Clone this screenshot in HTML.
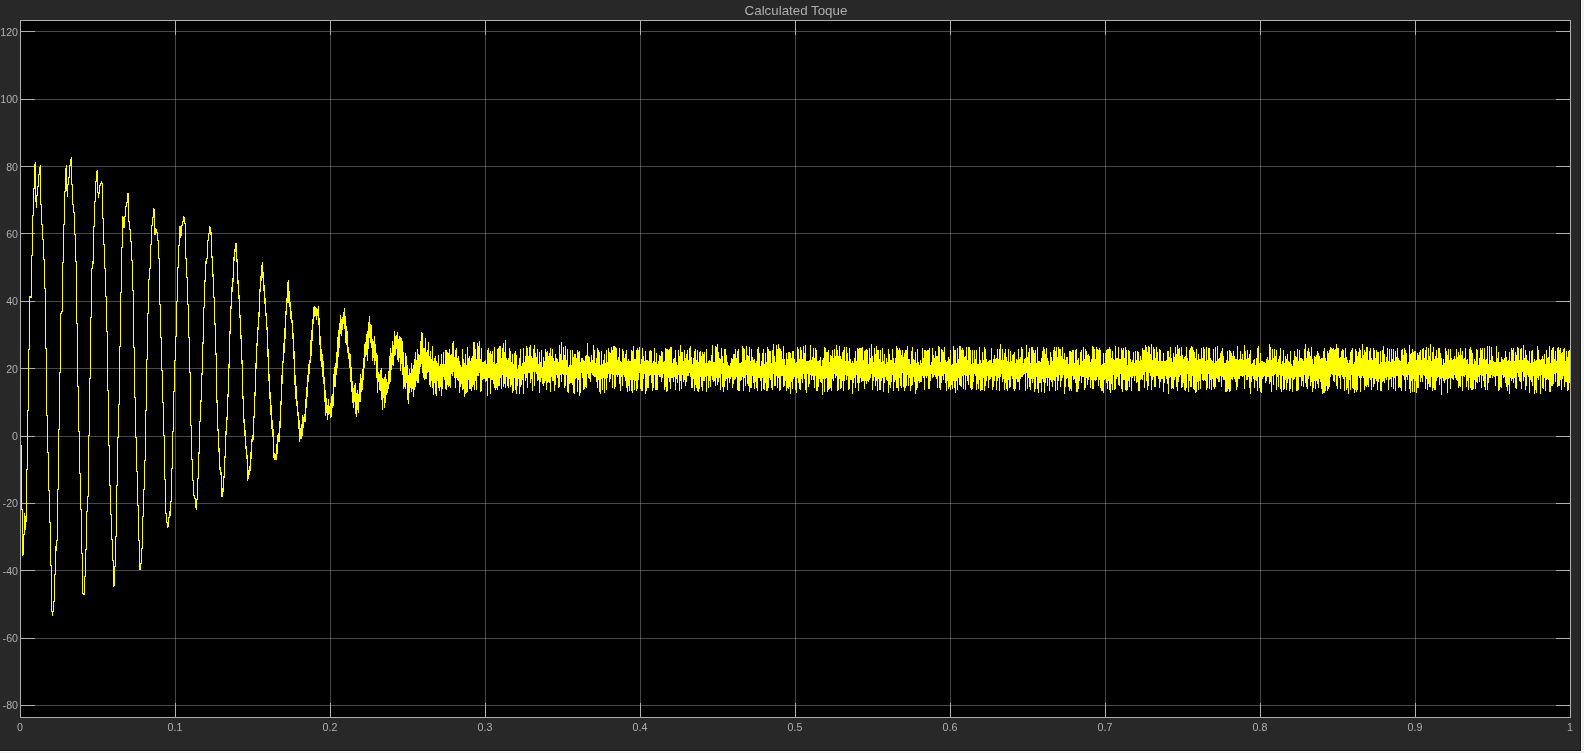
<!DOCTYPE html>
<html><head><meta charset="utf-8"><title>Calculated Toque</title>
<style>html,body{margin:0;padding:0;width:1584px;height:753px;overflow:hidden;background:#282828;}
body{position:relative;font-family:"Liberation Sans",sans-serif;}
.txt{position:absolute;left:0;top:0;width:1584px;height:753px;will-change:transform;color:#afafaf;font-family:"Liberation Sans",sans-serif;}
.yl{position:absolute;left:0;width:18px;text-align:right;font-size:10.67px;line-height:12px;white-space:nowrap}
.xl{position:absolute;top:721px;width:60px;text-align:center;font-size:10.67px;line-height:12px;white-space:nowrap}
.tt{position:absolute;left:696px;width:200px;top:3px;text-align:center;font-size:13.33px;line-height:16px;white-space:nowrap}</style></head>
<body><svg width="1584" height="753" viewBox="0 0 1584 753" style="position:absolute;left:0;top:0"><rect x="0" y="0" width="1584" height="753" fill="#282828"/><rect x="20" y="20" width="1551" height="698" fill="#000"/><path d="M175.5 21V717M330.5 21V717M485.5 21V717M640.5 21V717M795.5 21V717M950.5 21V717M1105.5 21V717M1260.5 21V717M1415.5 21V717" stroke="#afafaf" stroke-opacity="0.41" stroke-width="1" fill="none" shape-rendering="crispEdges"/><path d="M21 31.5H1570M21 99.5H1570M21 166.5H1570M21 233.5H1570M21 301.5H1570M21 368.5H1570M21 436.5H1570M21 503.5H1570M21 570.5H1570M21 638.5H1570M21 705.5H1570" stroke="#afafaf" stroke-opacity="0.41" stroke-width="1" fill="none" shape-rendering="crispEdges"/><path d="M21 31.5H35M1556 31.5H1570M21 99.5H35M1556 99.5H1570M21 166.5H35M1556 166.5H1570M21 233.5H35M1556 233.5H1570M21 301.5H35M1556 301.5H1570M21 368.5H35M1556 368.5H1570M21 436.5H35M1556 436.5H1570M21 503.5H35M1556 503.5H1570M21 570.5H35M1556 570.5H1570M21 638.5H35M1556 638.5H1570M21 705.5H35M1556 705.5H1570M175.5 703V717M175.5 21V35M330.5 703V717M330.5 21V35M485.5 703V717M485.5 21V35M640.5 703V717M640.5 21V35M795.5 703V717M795.5 21V35M950.5 703V717M950.5 21V35M1105.5 703V717M1105.5 21V35M1260.5 703V717M1260.5 21V35M1415.5 703V717M1415.5 21V35" stroke="#afafaf" stroke-width="1" fill="none" shape-rendering="crispEdges"/><path d="M21.5 445V510M22.5 509V556M23.5 534V555M24.5 513V535M25.5 516V530M26.5 469V522M27.5 410V470M28.5 349V411M29.5 296V350M30.5 296V298M31.5 255V298M32.5 215V256M33.5 188V216M34.5 164V189M35.5 162V202M36.5 195V208M37.5 186V196M38.5 174V187M39.5 167V175M40.5 165V205M41.5 204V225M42.5 224V240M43.5 239V260M44.5 259V289M45.5 288V349M46.5 348V416M47.5 415V453M48.5 452V491M49.5 490V523M50.5 522V566M51.5 565V612M52.5 611V616M53.5 601V612M54.5 574V602M55.5 546V575M56.5 540V551M57.5 489V541M58.5 429V490M59.5 372V430M60.5 313V373M61.5 311V314M62.5 262V312M63.5 224V263M64.5 191V225M65.5 168V192M66.5 165V191M67.5 184V197M68.5 177V185M69.5 165V178M70.5 159V166M71.5 157V185M72.5 184V205M73.5 204V213M74.5 212V235M75.5 234V262M76.5 261V324M77.5 323V387M78.5 386V432M79.5 431V474M80.5 473V510M81.5 509V554M82.5 553V594M83.5 593V595M84.5 576V595M85.5 549V577M86.5 511V550M87.5 496V512M88.5 435V497M89.5 378V436M90.5 317V379M91.5 268V318M92.5 261V269M93.5 226V264M94.5 201V227M95.5 181V202M96.5 171V182M97.5 170V193M98.5 192V198M99.5 185V194M100.5 183V186M101.5 181V184M102.5 183V219M103.5 218V245M104.5 244V269M105.5 268V297M106.5 296V332M107.5 331V391M108.5 390V446M109.5 445V486M110.5 485V515M111.5 514V540M112.5 539V561M113.5 560V587M114.5 566V586M115.5 536V567M116.5 485V537M117.5 437V486M118.5 404V438M119.5 346V405M120.5 292V347M121.5 247V293M122.5 216V248M123.5 217V228M124.5 216V228M125.5 206V217M126.5 202V207M127.5 193V203M128.5 193V222M129.5 221V230M130.5 229V242M131.5 241V261M132.5 260V291M133.5 290V348M134.5 347V398M135.5 397V438M136.5 437V472M137.5 471V506M138.5 505V541M139.5 540V570M140.5 563V570M141.5 548V564M142.5 516V549M143.5 489V517M144.5 460V490M145.5 410V461M146.5 359V411M147.5 313V360M148.5 279V314M149.5 268V280M150.5 244V269M151.5 225V245M152.5 217V226M153.5 208V218M154.5 209V235M155.5 228V235M156.5 229V233M157.5 232V241M158.5 240V259M159.5 258V305M160.5 304V338M161.5 337V371M162.5 370V403M163.5 402V436M164.5 435V480M165.5 479V514M166.5 513V523M167.5 522V528M168.5 517V527M169.5 511V518M170.5 501V516M171.5 468V502M172.5 431V469M173.5 391V432M174.5 360V392M175.5 336V361M176.5 301V337M177.5 267V302M178.5 245V268M179.5 226V246M180.5 226V238M181.5 225V236M182.5 221V226M183.5 216V222M184.5 217V224M185.5 223V259M186.5 258V278M187.5 277V305M188.5 304V338M189.5 337V373M190.5 372V426M191.5 425V460M192.5 459V481M193.5 480V496M194.5 495V499M195.5 498V508M196.5 499V510M197.5 478V500M198.5 452V479M199.5 421V454M200.5 400V422M201.5 373V402M202.5 342V375M203.5 307V344M204.5 280V308M205.5 261V282M206.5 258V264M207.5 240V259M208.5 233V241M209.5 226V234M210.5 227V235M211.5 232V258M212.5 256V277M213.5 274V298M214.5 297V325M215.5 323V355M216.5 353V403M217.5 400V431M218.5 429V452M219.5 448V470M220.5 467V475M221.5 472V497M222.5 488V497M223.5 476V492M224.5 456V478M225.5 431V458M226.5 417V435M227.5 394V420M228.5 364V397M229.5 331V368M230.5 306V334M231.5 287V309M232.5 278V292M233.5 257V282M234.5 249V261M235.5 243V252M236.5 243V262M237.5 259V284M238.5 280V299M239.5 295V318M240.5 315V339M241.5 335V364M242.5 360V399M243.5 396V423M244.5 419V436M245.5 430V449M246.5 446V459M247.5 455V481M248.5 470V479M249.5 466V475M250.5 452V471M251.5 439V459M252.5 435V442M253.5 416V440M254.5 392V418M255.5 363V396M256.5 343V369M257.5 327V346M258.5 312V330M259.5 289V317M260.5 276V292M261.5 265V281M262.5 262V278M263.5 272V291M264.5 285V304M265.5 298V316M266.5 313V330M267.5 327V357M268.5 349V381M269.5 374V399M270.5 392V415M271.5 405V429M272.5 420V437M273.5 429V458M274.5 453V460M275.5 454V460M276.5 444V460M277.5 435V454M278.5 433V442M279.5 421V442M280.5 401V428M281.5 375V405M282.5 361V384M283.5 343V363M284.5 328V353M285.5 311V339M286.5 298V315M287.5 282V303M288.5 280V303M289.5 291V307M290.5 302V319M291.5 311V323M292.5 320V339M293.5 333V359M294.5 351V385M295.5 375V399M296.5 386V406M297.5 401V416M298.5 412V429M299.5 420V442M300.5 428V439M301.5 424V439M302.5 415V436M303.5 417V428M304.5 414V422M305.5 399V422M306.5 387V408M307.5 375V397M308.5 364V382M309.5 360V374M310.5 340V363M311.5 330V356M312.5 319V341M313.5 307V324M314.5 306V317M315.5 307V316M316.5 308V320M317.5 309V316M318.5 306V325M319.5 318V345M320.5 336V361M321.5 349V367M322.5 354V377M323.5 361V384M324.5 377V402M325.5 390V416M326.5 398V413M327.5 405V420M328.5 399V415M329.5 406V414M330.5 403V418M331.5 396V417M332.5 394V408M333.5 374V406M334.5 367V387M335.5 363V387M336.5 352V375M337.5 337V368M338.5 330V357M339.5 323V348M340.5 315V334M341.5 319V336M342.5 317V330M343.5 312V324M344.5 308V329M345.5 316V343M346.5 326V345M347.5 331V353M348.5 347V359M349.5 353V368M350.5 354V382M351.5 367V392M352.5 381V403M353.5 388V408M354.5 385V402M355.5 383V414M356.5 393V417M357.5 390V410M358.5 394V413M359.5 383V402M360.5 374V402M361.5 378V392M362.5 369V390M363.5 358V380M364.5 344V368M365.5 342V357M366.5 334V355M367.5 331V361M368.5 322V349M369.5 316V338M370.5 324V343M371.5 325V348M372.5 339V361M373.5 341V358M374.5 336V365M375.5 344V361M376.5 353V378M377.5 355V393M378.5 372V382M379.5 374V390M380.5 370V391M381.5 368V400M382.5 378V410M383.5 379V398M384.5 377V408M385.5 374V403M386.5 379V395M387.5 382V393M388.5 371V389M389.5 356V384M390.5 348V382M391.5 353V370M392.5 341V365M393.5 345V366M394.5 331V356M395.5 336V355M396.5 335V349M397.5 332V360M398.5 339V362M399.5 336V358M400.5 337V371M401.5 338V364M402.5 341V375M403.5 352V389M404.5 367V387M405.5 353V389M406.5 356V383M407.5 365V400M408.5 375V404M409.5 369V393M410.5 373V388M411.5 363V392M412.5 369V389M413.5 365V397M414.5 359V390M415.5 352V387M416.5 360V381M417.5 349V383M418.5 354V383M419.5 355V374M420.5 341V367M421.5 332V364M422.5 333V373M423.5 348V378M424.5 348V380M425.5 338V379M426.5 352V379M427.5 350V373M428.5 342V372M429.5 356V385M430.5 351V387M431.5 359V381M432.5 346V388M433.5 361V395M434.5 358V383M435.5 356V394M436.5 361V396M437.5 363V381M438.5 355V388M439.5 366V391M440.5 364V387M441.5 354V396M442.5 364V389M443.5 352V377M444.5 364V380M445.5 350V389M446.5 350V390M447.5 352V385M448.5 353V387M449.5 349V386M450.5 355V388M451.5 354V374M452.5 343V376M453.5 341V372M454.5 357V378M455.5 350V388M456.5 348V378M457.5 358V380M458.5 356V381M459.5 361V393M460.5 365V387M461.5 367V384M462.5 349V390M463.5 359V389M464.5 363V397M465.5 354V394M466.5 365V393M467.5 347V392M468.5 358V380M469.5 356V389M470.5 361V389M471.5 358V391M472.5 356V387M473.5 342V385M474.5 342V390M475.5 349V381M476.5 359V390M477.5 343V376M478.5 346V376M479.5 341V373M480.5 359V392M481.5 348V391M482.5 362V380M483.5 362V379M484.5 361V379M485.5 360V382M486.5 364V381M487.5 350V396M488.5 348V378M489.5 353V378M490.5 351V394M491.5 354V380M492.5 351V380M493.5 362V384M494.5 347V388M495.5 364V390M496.5 363V388M497.5 349V390M498.5 348V386M499.5 346V386M500.5 346V378M501.5 358V389M502.5 348V375M503.5 343V387M504.5 352V384M505.5 340V388M506.5 358V377M507.5 360V386M508.5 358V388M509.5 348V379M510.5 351V387M511.5 362V385M512.5 354V393M513.5 364V391M514.5 353V378M515.5 351V390M516.5 355V394M517.5 369V386M518.5 365V379M519.5 358V394M520.5 349V387M521.5 366V385M522.5 363V380M523.5 348V394M524.5 362V374M525.5 356V381M526.5 346V378M527.5 348V388M528.5 356V373M529.5 347V373M530.5 345V383M531.5 356V379M532.5 358V391M533.5 349V372M534.5 345V386M535.5 353V372M536.5 357V374M537.5 349V381M538.5 364V380M539.5 352V393M540.5 362V382M541.5 350V378M542.5 367V384M543.5 357V386M544.5 361V383M545.5 349V381M546.5 352V390M547.5 351V383M548.5 356V382M549.5 353V383M550.5 348V392M551.5 356V377M552.5 349V381M553.5 358V381M554.5 361V391M555.5 354V385M556.5 358V375M557.5 359V378M558.5 362V388M559.5 345V387M560.5 354V375M561.5 342V382M562.5 360V374M563.5 347V375M564.5 355V388M565.5 346V386M566.5 360V375M567.5 349V392M568.5 367V393M569.5 365V384M570.5 350V383M571.5 365V383M572.5 350V385M573.5 357V393M574.5 354V394M575.5 354V379M576.5 358V378M577.5 350V392M578.5 352V380M579.5 351V396M580.5 362V393M581.5 358V373M582.5 358V378M583.5 360V390M584.5 361V389M585.5 356V387M586.5 355V388M587.5 343V374M588.5 356V378M589.5 357V379M590.5 362V382M591.5 355V373M592.5 360V375M593.5 345V376M594.5 350V377M595.5 363V377M596.5 358V382M597.5 348V388M598.5 350V380M599.5 352V392M600.5 365V394M601.5 351V379M602.5 364V390M603.5 360V378M604.5 354V393M605.5 363V379M606.5 350V390M607.5 362V378M608.5 348V374M609.5 352V382M610.5 353V379M611.5 347V374M612.5 350V388M613.5 346V375M614.5 346V389M615.5 347V387M616.5 348V375M617.5 360V377M618.5 357V375M619.5 348V384M620.5 361V391M621.5 362V377M622.5 349V386M623.5 351V375M624.5 358V377M625.5 354V381M626.5 350V388M627.5 361V392M628.5 359V386M629.5 361V391M630.5 361V380M631.5 350V391M632.5 351V393M633.5 346V380M634.5 359V390M635.5 359V381M636.5 350V391M637.5 348V389M638.5 350V380M639.5 347V373M640.5 364V389M641.5 359V391M642.5 348V391M643.5 356V379M644.5 361V374M645.5 351V394M646.5 360V391M647.5 360V388M648.5 361V388M649.5 351V376M650.5 350V375M651.5 351V383M652.5 363V391M653.5 361V388M654.5 348V375M655.5 362V390M656.5 353V390M657.5 364V390M658.5 361V375M659.5 355V377M660.5 356V377M661.5 351V382M662.5 352V378M663.5 362V374M664.5 361V390M665.5 348V387M666.5 349V392M667.5 349V391M668.5 350V378M669.5 349V382M670.5 347V389M671.5 347V378M672.5 363V378M673.5 359V382M674.5 358V377M675.5 350V390M676.5 362V379M677.5 365V383M678.5 350V375M679.5 356V391M680.5 345V381M681.5 352V389M682.5 352V375M683.5 361V382M684.5 350V380M685.5 358V386M686.5 354V382M687.5 350V376M688.5 360V376M689.5 348V373M690.5 346V377M691.5 357V388M692.5 364V388M693.5 358V379M694.5 351V391M695.5 349V385M696.5 360V388M697.5 350V391M698.5 362V392M699.5 352V389M700.5 351V377M701.5 356V387M702.5 352V391M703.5 354V381M704.5 352V381M705.5 363V377M706.5 349V392M707.5 363V376M708.5 361V388M709.5 360V381M710.5 361V387M711.5 355V376M712.5 345V380M713.5 362V382M714.5 362V381M715.5 346V386M716.5 347V378M717.5 344V385M718.5 352V382M719.5 358V378M720.5 359V390M721.5 348V374M722.5 356V387M723.5 363V392M724.5 349V387M725.5 349V381M726.5 355V379M727.5 362V390M728.5 365V378M729.5 366V383M730.5 363V379M731.5 358V377M732.5 359V388M733.5 354V384M734.5 354V380M735.5 349V379M736.5 358V377M737.5 351V390M738.5 349V391M739.5 363V391M740.5 363V381M741.5 362V380M742.5 346V377M743.5 348V391M744.5 349V378M745.5 360V386M746.5 346V375M747.5 355V384M748.5 356V386M749.5 347V392M750.5 361V388M751.5 349V388M752.5 357V376M753.5 360V383M754.5 359V389M755.5 363V382M756.5 361V388M757.5 349V391M758.5 347V378M759.5 353V378M760.5 366V381M761.5 361V391M762.5 353V378M763.5 349V389M764.5 364V390M765.5 353V383M766.5 362V391M767.5 347V391M768.5 349V388M769.5 351V378M770.5 351V380M771.5 363V388M772.5 350V390M773.5 344V374M774.5 356V386M775.5 362V386M776.5 345V376M777.5 349V388M778.5 344V378M779.5 348V391M780.5 349V390M781.5 351V376M782.5 359V376M783.5 346V387M784.5 359V386M785.5 365V381M786.5 353V391M787.5 359V388M788.5 352V389M789.5 352V387M790.5 353V394M791.5 358V382M792.5 351V389M793.5 351V379M794.5 359V377M795.5 363V390M796.5 362V393M797.5 347V378M798.5 349V383M799.5 359V389M800.5 347V390M801.5 350V379M802.5 359V383M803.5 346V374M804.5 353V379M805.5 345V390M806.5 361V393M807.5 361V374M808.5 361V387M809.5 360V384M810.5 345V375M811.5 360V380M812.5 357V376M813.5 348V380M814.5 358V388M815.5 348V376M816.5 350V391M817.5 361V391M818.5 361V387M819.5 360V379M820.5 357V382M821.5 366V383M822.5 360V395M823.5 358V379M824.5 347V392M825.5 348V379M826.5 352V378M827.5 352V392M828.5 350V390M829.5 362V389M830.5 355V388M831.5 356V391M832.5 350V379M833.5 358V381M834.5 349V374M835.5 356V378M836.5 345V376M837.5 350V391M838.5 356V390M839.5 346V379M840.5 356V389M841.5 359V388M842.5 352V381M843.5 350V391M844.5 347V381M845.5 361V375M846.5 347V380M847.5 353V376M848.5 361V390M849.5 348V389M850.5 359V380M851.5 363V380M852.5 361V394M853.5 363V383M854.5 358V378M855.5 351V388M856.5 361V375M857.5 348V383M858.5 349V391M859.5 348V383M860.5 348V378M861.5 348V382M862.5 347V381M863.5 360V381M864.5 351V389M865.5 350V381M866.5 349V384M867.5 350V381M868.5 364V382M869.5 348V380M870.5 358V378M871.5 344V374M872.5 356V390M873.5 362V381M874.5 348V377M875.5 354V386M876.5 346V381M877.5 350V391M878.5 350V379M879.5 359V390M880.5 350V390M881.5 362V381M882.5 348V378M883.5 361V392M884.5 354V383M885.5 364V377M886.5 358V380M887.5 362V381M888.5 349V393M889.5 354V385M890.5 360V388M891.5 360V382M892.5 349V375M893.5 358V391M894.5 363V382M895.5 358V380M896.5 346V388M897.5 348V388M898.5 350V391M899.5 348V378M900.5 350V386M901.5 355V388M902.5 350V373M903.5 357V387M904.5 353V391M905.5 350V388M906.5 350V386M907.5 346V375M908.5 359V386M909.5 359V378M910.5 364V391M911.5 351V386M912.5 347V385M913.5 359V377M914.5 360V382M915.5 352V394M916.5 363V390M917.5 349V388M918.5 362V381M919.5 365V383M920.5 360V382M921.5 363V382M922.5 348V376M923.5 358V378M924.5 350V390M925.5 350V376M926.5 351V378M927.5 350V376M928.5 350V389M929.5 348V389M930.5 365V381M931.5 362V374M932.5 348V378M933.5 355V377M934.5 358V375M935.5 351V377M936.5 356V379M937.5 356V388M938.5 346V376M939.5 347V388M940.5 362V390M941.5 349V383M942.5 350V376M943.5 352V380M944.5 347V374M945.5 360V383M946.5 362V391M947.5 361V381M948.5 357V389M949.5 359V387M950.5 350V390M951.5 365V385M952.5 364V389M953.5 346V381M954.5 350V388M955.5 350V393M956.5 363V381M957.5 348V390M958.5 359V378M959.5 346V385M960.5 346V386M961.5 350V387M962.5 348V376M963.5 350V389M964.5 357V375M965.5 356V390M966.5 347V376M967.5 360V381M968.5 347V385M969.5 347V375M970.5 350V388M971.5 364V390M972.5 350V389M973.5 363V382M974.5 350V374M975.5 359V376M976.5 350V390M977.5 364V384M978.5 364V389M979.5 347V380M980.5 360V391M981.5 363V390M982.5 352V390M983.5 360V378M984.5 347V391M985.5 349V386M986.5 359V381M987.5 362V376M988.5 361V388M989.5 360V380M990.5 360V379M991.5 348V377M992.5 363V390M993.5 359V387M994.5 355V381M995.5 359V376M996.5 358V390M997.5 349V381M998.5 359V378M999.5 349V391M1000.5 344V377M1001.5 360V374M1002.5 349V382M1003.5 360V379M1004.5 353V390M1005.5 349V383M1006.5 357V389M1007.5 361V391M1008.5 349V380M1009.5 362V388M1010.5 351V387M1011.5 361V376M1012.5 355V379M1013.5 354V389M1014.5 352V391M1015.5 363V389M1016.5 359V379M1017.5 360V382M1018.5 349V382M1019.5 359V390M1020.5 357V379M1021.5 347V377M1022.5 349V377M1023.5 363V375M1024.5 359V374M1025.5 358V391M1026.5 345V373M1027.5 357V389M1028.5 352V378M1029.5 348V387M1030.5 363V390M1031.5 347V379M1032.5 347V383M1033.5 350V379M1034.5 353V392M1035.5 350V389M1036.5 363V377M1037.5 347V389M1038.5 361V393M1039.5 361V383M1040.5 362V383M1041.5 358V392M1042.5 351V379M1043.5 347V382M1044.5 349V393M1045.5 354V383M1046.5 348V378M1047.5 358V386M1048.5 361V378M1049.5 365V391M1050.5 352V380M1051.5 357V382M1052.5 361V387M1053.5 350V380M1054.5 347V381M1055.5 351V391M1056.5 347V377M1057.5 357V390M1058.5 347V381M1059.5 349V375M1060.5 349V387M1061.5 356V381M1062.5 347V378M1063.5 359V375M1064.5 353V394M1065.5 360V387M1066.5 357V379M1067.5 357V378M1068.5 364V387M1069.5 351V391M1070.5 351V389M1071.5 352V391M1072.5 350V376M1073.5 350V380M1074.5 363V379M1075.5 350V383M1076.5 349V392M1077.5 360V392M1078.5 358V389M1079.5 365V381M1080.5 352V376M1081.5 350V383M1082.5 361V377M1083.5 347V377M1084.5 359V390M1085.5 349V388M1086.5 351V378M1087.5 355V385M1088.5 354V380M1089.5 356V377M1090.5 362V388M1091.5 359V380M1092.5 346V389M1093.5 347V389M1094.5 349V380M1095.5 359V381M1096.5 347V380M1097.5 349V377M1098.5 350V386M1099.5 348V380M1100.5 350V388M1101.5 365V391M1102.5 364V391M1103.5 353V393M1104.5 363V380M1105.5 353V379M1106.5 350V383M1107.5 349V389M1108.5 349V381M1109.5 347V390M1110.5 349V393M1111.5 358V384M1112.5 351V390M1113.5 359V375M1114.5 360V390M1115.5 346V389M1116.5 358V379M1117.5 358V377M1118.5 347V385M1119.5 359V386M1120.5 359V374M1121.5 348V389M1122.5 350V392M1123.5 348V380M1124.5 358V380M1125.5 347V390M1126.5 350V391M1127.5 365V390M1128.5 350V381M1129.5 351V387M1130.5 359V377M1131.5 362V391M1132.5 360V378M1133.5 352V376M1134.5 363V381M1135.5 351V376M1136.5 360V383M1137.5 351V382M1138.5 352V391M1139.5 361V391M1140.5 356V380M1141.5 360V379M1142.5 348V380M1143.5 350V375M1144.5 350V388M1145.5 345V372M1146.5 347V381M1147.5 352V390M1148.5 346V386M1149.5 347V373M1150.5 354V376M1151.5 344V390M1152.5 360V380M1153.5 347V377M1154.5 349V387M1155.5 358V387M1156.5 347V376M1157.5 352V376M1158.5 361V379M1159.5 349V388M1160.5 350V382M1161.5 361V379M1162.5 361V379M1163.5 353V392M1164.5 361V383M1165.5 361V376M1166.5 360V379M1167.5 351V384M1168.5 351V394M1169.5 357V378M1170.5 347V377M1171.5 358V389M1172.5 362V388M1173.5 353V389M1174.5 357V380M1175.5 347V377M1176.5 354V387M1177.5 345V391M1178.5 349V382M1179.5 348V377M1180.5 356V375M1181.5 347V388M1182.5 355V387M1183.5 359V383M1184.5 357V390M1185.5 356V391M1186.5 347V388M1187.5 358V374M1188.5 361V392M1189.5 350V381M1190.5 348V387M1191.5 346V387M1192.5 347V376M1193.5 350V389M1194.5 352V390M1195.5 358V393M1196.5 349V392M1197.5 360V382M1198.5 354V390M1199.5 359V381M1200.5 359V389M1201.5 348V374M1202.5 358V380M1203.5 347V381M1204.5 349V380M1205.5 361V381M1206.5 347V390M1207.5 360V388M1208.5 348V374M1209.5 348V389M1210.5 358V380M1211.5 360V390M1212.5 361V379M1213.5 349V387M1214.5 363V389M1215.5 347V387M1216.5 361V378M1217.5 346V379M1218.5 359V382M1219.5 358V382M1220.5 353V376M1221.5 351V387M1222.5 348V377M1223.5 356V380M1224.5 363V380M1225.5 363V392M1226.5 360V392M1227.5 351V391M1228.5 361V389M1229.5 350V392M1230.5 351V391M1231.5 353V379M1232.5 356V380M1233.5 351V377M1234.5 356V379M1235.5 359V382M1236.5 359V390M1237.5 346V387M1238.5 360V379M1239.5 359V379M1240.5 351V376M1241.5 359V376M1242.5 354V377M1243.5 360V376M1244.5 345V389M1245.5 351V375M1246.5 359V380M1247.5 350V380M1248.5 358V377M1249.5 354V388M1250.5 350V394M1251.5 364V382M1252.5 363V376M1253.5 360V379M1254.5 359V388M1255.5 365V380M1256.5 358V381M1257.5 348V391M1258.5 346V377M1259.5 363V388M1260.5 353V392M1261.5 361V393M1262.5 361V379M1263.5 362V377M1264.5 362V376M1265.5 363V383M1266.5 359V381M1267.5 357V377M1268.5 360V377M1269.5 344V384M1270.5 347V382M1271.5 360V392M1272.5 349V376M1273.5 358V385M1274.5 349V375M1275.5 356V374M1276.5 350V390M1277.5 362V377M1278.5 359V387M1279.5 356V375M1280.5 348V389M1281.5 364V392M1282.5 361V376M1283.5 350V390M1284.5 363V389M1285.5 356V380M1286.5 359V390M1287.5 354V383M1288.5 361V379M1289.5 362V391M1290.5 351V389M1291.5 364V378M1292.5 366V392M1293.5 360V380M1294.5 351V379M1295.5 356V377M1296.5 357V391M1297.5 349V391M1298.5 361V390M1299.5 350V377M1300.5 358V377M1301.5 358V386M1302.5 359V381M1303.5 361V387M1304.5 349V375M1305.5 344V383M1306.5 358V387M1307.5 351V389M1308.5 348V379M1309.5 352V376M1310.5 356V386M1311.5 347V382M1312.5 359V392M1313.5 364V388M1314.5 356V381M1315.5 357V389M1316.5 355V381M1317.5 351V384M1318.5 353V388M1319.5 356V379M1320.5 359V382M1321.5 358V389M1322.5 358V394M1323.5 351V393M1324.5 348V393M1325.5 358V391M1326.5 361V386M1327.5 351V391M1328.5 353V389M1329.5 350V387M1330.5 347V377M1331.5 348V374M1332.5 349V375M1333.5 348V381M1334.5 350V382M1335.5 349V375M1336.5 344V386M1337.5 348V389M1338.5 348V376M1339.5 358V378M1340.5 357V389M1341.5 351V375M1342.5 349V377M1343.5 350V379M1344.5 358V391M1345.5 348V377M1346.5 357V390M1347.5 360V388M1348.5 363V394M1349.5 360V380M1350.5 352V390M1351.5 350V375M1352.5 348V388M1353.5 364V389M1354.5 362V393M1355.5 349V390M1356.5 351V392M1357.5 356V390M1358.5 352V376M1359.5 348V378M1360.5 350V392M1361.5 358V378M1362.5 344V376M1363.5 355V378M1364.5 350V390M1365.5 352V386M1366.5 347V387M1367.5 347V385M1368.5 360V387M1369.5 351V378M1370.5 348V380M1371.5 358V390M1372.5 360V378M1373.5 348V387M1374.5 350V384M1375.5 358V379M1376.5 350V381M1377.5 352V390M1378.5 352V382M1379.5 364V379M1380.5 351V391M1381.5 362V391M1382.5 350V382M1383.5 346V381M1384.5 354V383M1385.5 362V378M1386.5 357V380M1387.5 348V377M1388.5 361V390M1389.5 349V380M1390.5 362V379M1391.5 349V387M1392.5 359V377M1393.5 349V389M1394.5 361V378M1395.5 351V391M1396.5 357V376M1397.5 348V376M1398.5 358V388M1399.5 360V387M1400.5 361V388M1401.5 350V391M1402.5 349V375M1403.5 355V376M1404.5 348V380M1405.5 350V391M1406.5 353V377M1407.5 364V380M1408.5 362V375M1409.5 345V389M1410.5 354V393M1411.5 353V381M1412.5 349V392M1413.5 352V379M1414.5 351V392M1415.5 351V381M1416.5 360V393M1417.5 353V388M1418.5 355V388M1419.5 352V375M1420.5 350V382M1421.5 360V378M1422.5 349V382M1423.5 348V375M1424.5 358V376M1425.5 350V389M1426.5 347V379M1427.5 360V390M1428.5 348V384M1429.5 356V387M1430.5 344V387M1431.5 361V377M1432.5 352V391M1433.5 347V388M1434.5 359V390M1435.5 356V390M1436.5 350V381M1437.5 358V378M1438.5 348V377M1439.5 348V385M1440.5 353V379M1441.5 358V395M1442.5 365V378M1443.5 359V381M1444.5 363V383M1445.5 348V380M1446.5 351V379M1447.5 355V393M1448.5 349V379M1449.5 360V378M1450.5 349V389M1451.5 358V378M1452.5 360V379M1453.5 359V380M1454.5 356V375M1455.5 359V378M1456.5 349V380M1457.5 357V381M1458.5 352V388M1459.5 355V386M1460.5 348V387M1461.5 355V376M1462.5 351V391M1463.5 359V376M1464.5 358V377M1465.5 348V375M1466.5 360V387M1467.5 359V381M1468.5 364V390M1469.5 349V378M1470.5 347V388M1471.5 350V390M1472.5 353V390M1473.5 364V389M1474.5 359V380M1475.5 361V389M1476.5 349V382M1477.5 350V383M1478.5 365V377M1479.5 358V382M1480.5 348V375M1481.5 350V388M1482.5 348V376M1483.5 359V381M1484.5 348V387M1485.5 360V390M1486.5 359V374M1487.5 346V390M1488.5 364V383M1489.5 346V378M1490.5 360V378M1491.5 347V375M1492.5 356V378M1493.5 361V376M1494.5 362V377M1495.5 362V386M1496.5 346V376M1497.5 358V376M1498.5 352V391M1499.5 362V390M1500.5 362V387M1501.5 357V388M1502.5 359V375M1503.5 360V378M1504.5 358V377M1505.5 351V383M1506.5 357V387M1507.5 361V391M1508.5 360V385M1509.5 352V394M1510.5 361V378M1511.5 348V381M1512.5 350V379M1513.5 348V383M1514.5 361V378M1515.5 352V388M1516.5 355V389M1517.5 347V373M1518.5 348V377M1519.5 360V381M1520.5 349V382M1521.5 348V389M1522.5 360V372M1523.5 345V381M1524.5 358V377M1525.5 350V390M1526.5 355V386M1527.5 360V375M1528.5 361V377M1529.5 351V393M1530.5 363V380M1531.5 351V382M1532.5 350V386M1533.5 362V376M1534.5 359V394M1535.5 361V390M1536.5 360V393M1537.5 346V378M1538.5 350V380M1539.5 359V376M1540.5 360V394M1541.5 359V375M1542.5 356V388M1543.5 359V389M1544.5 354V378M1545.5 364V391M1546.5 350V380M1547.5 358V379M1548.5 357V380M1549.5 346V392M1550.5 363V392M1551.5 350V386M1552.5 348V386M1553.5 347V384M1554.5 359V374M1555.5 351V382M1556.5 361V373M1557.5 348V387M1558.5 347V386M1559.5 350V386M1560.5 348V380M1561.5 353V390M1562.5 352V379M1563.5 349V376M1564.5 348V387M1565.5 361V382M1566.5 351V382M1567.5 357V391M1568.5 351V390M1569.5 350V383" stroke="#ffff00" stroke-width="1" fill="none" shape-rendering="crispEdges"/><path d="M20.5 20V718M1570.5 20V718M20 20.5H1571M20 717.5H1571" stroke="#afafaf" stroke-width="1" fill="none" shape-rendering="crispEdges"/><rect x="1580" y="0" width="1" height="751" fill="#1b1b1b"/><rect x="0" y="750" width="1581" height="1" fill="#1b1b1b"/><rect x="1581" y="0" width="3" height="753" fill="#f0f0f0"/><rect x="0" y="751" width="1584" height="2" fill="#f0f0f0"/><rect x="1581" y="0" width="1" height="752" fill="#ffffff"/><rect x="0" y="751" width="1582" height="1" fill="#ffffff"/></svg><div class="txt"><div class="yl" style="top:26px">120</div><div class="yl" style="top:93px">100</div><div class="yl" style="top:161px">80</div><div class="yl" style="top:228px">60</div><div class="yl" style="top:295px">40</div><div class="yl" style="top:363px">20</div><div class="yl" style="top:430px">0</div><div class="yl" style="top:497px">-20</div><div class="yl" style="top:565px">-40</div><div class="yl" style="top:632px">-60</div><div class="yl" style="top:699px">-80</div><div class="xl" style="left:-10px">0</div><div class="xl" style="left:145px">0.1</div><div class="xl" style="left:300px">0.2</div><div class="xl" style="left:455px">0.3</div><div class="xl" style="left:610px">0.4</div><div class="xl" style="left:765px">0.5</div><div class="xl" style="left:920px">0.6</div><div class="xl" style="left:1075px">0.7</div><div class="xl" style="left:1230px">0.8</div><div class="xl" style="left:1385px">0.9</div><div class="xl" style="left:1540px">1</div><div class="tt">Calculated Toque</div></div></body></html>
